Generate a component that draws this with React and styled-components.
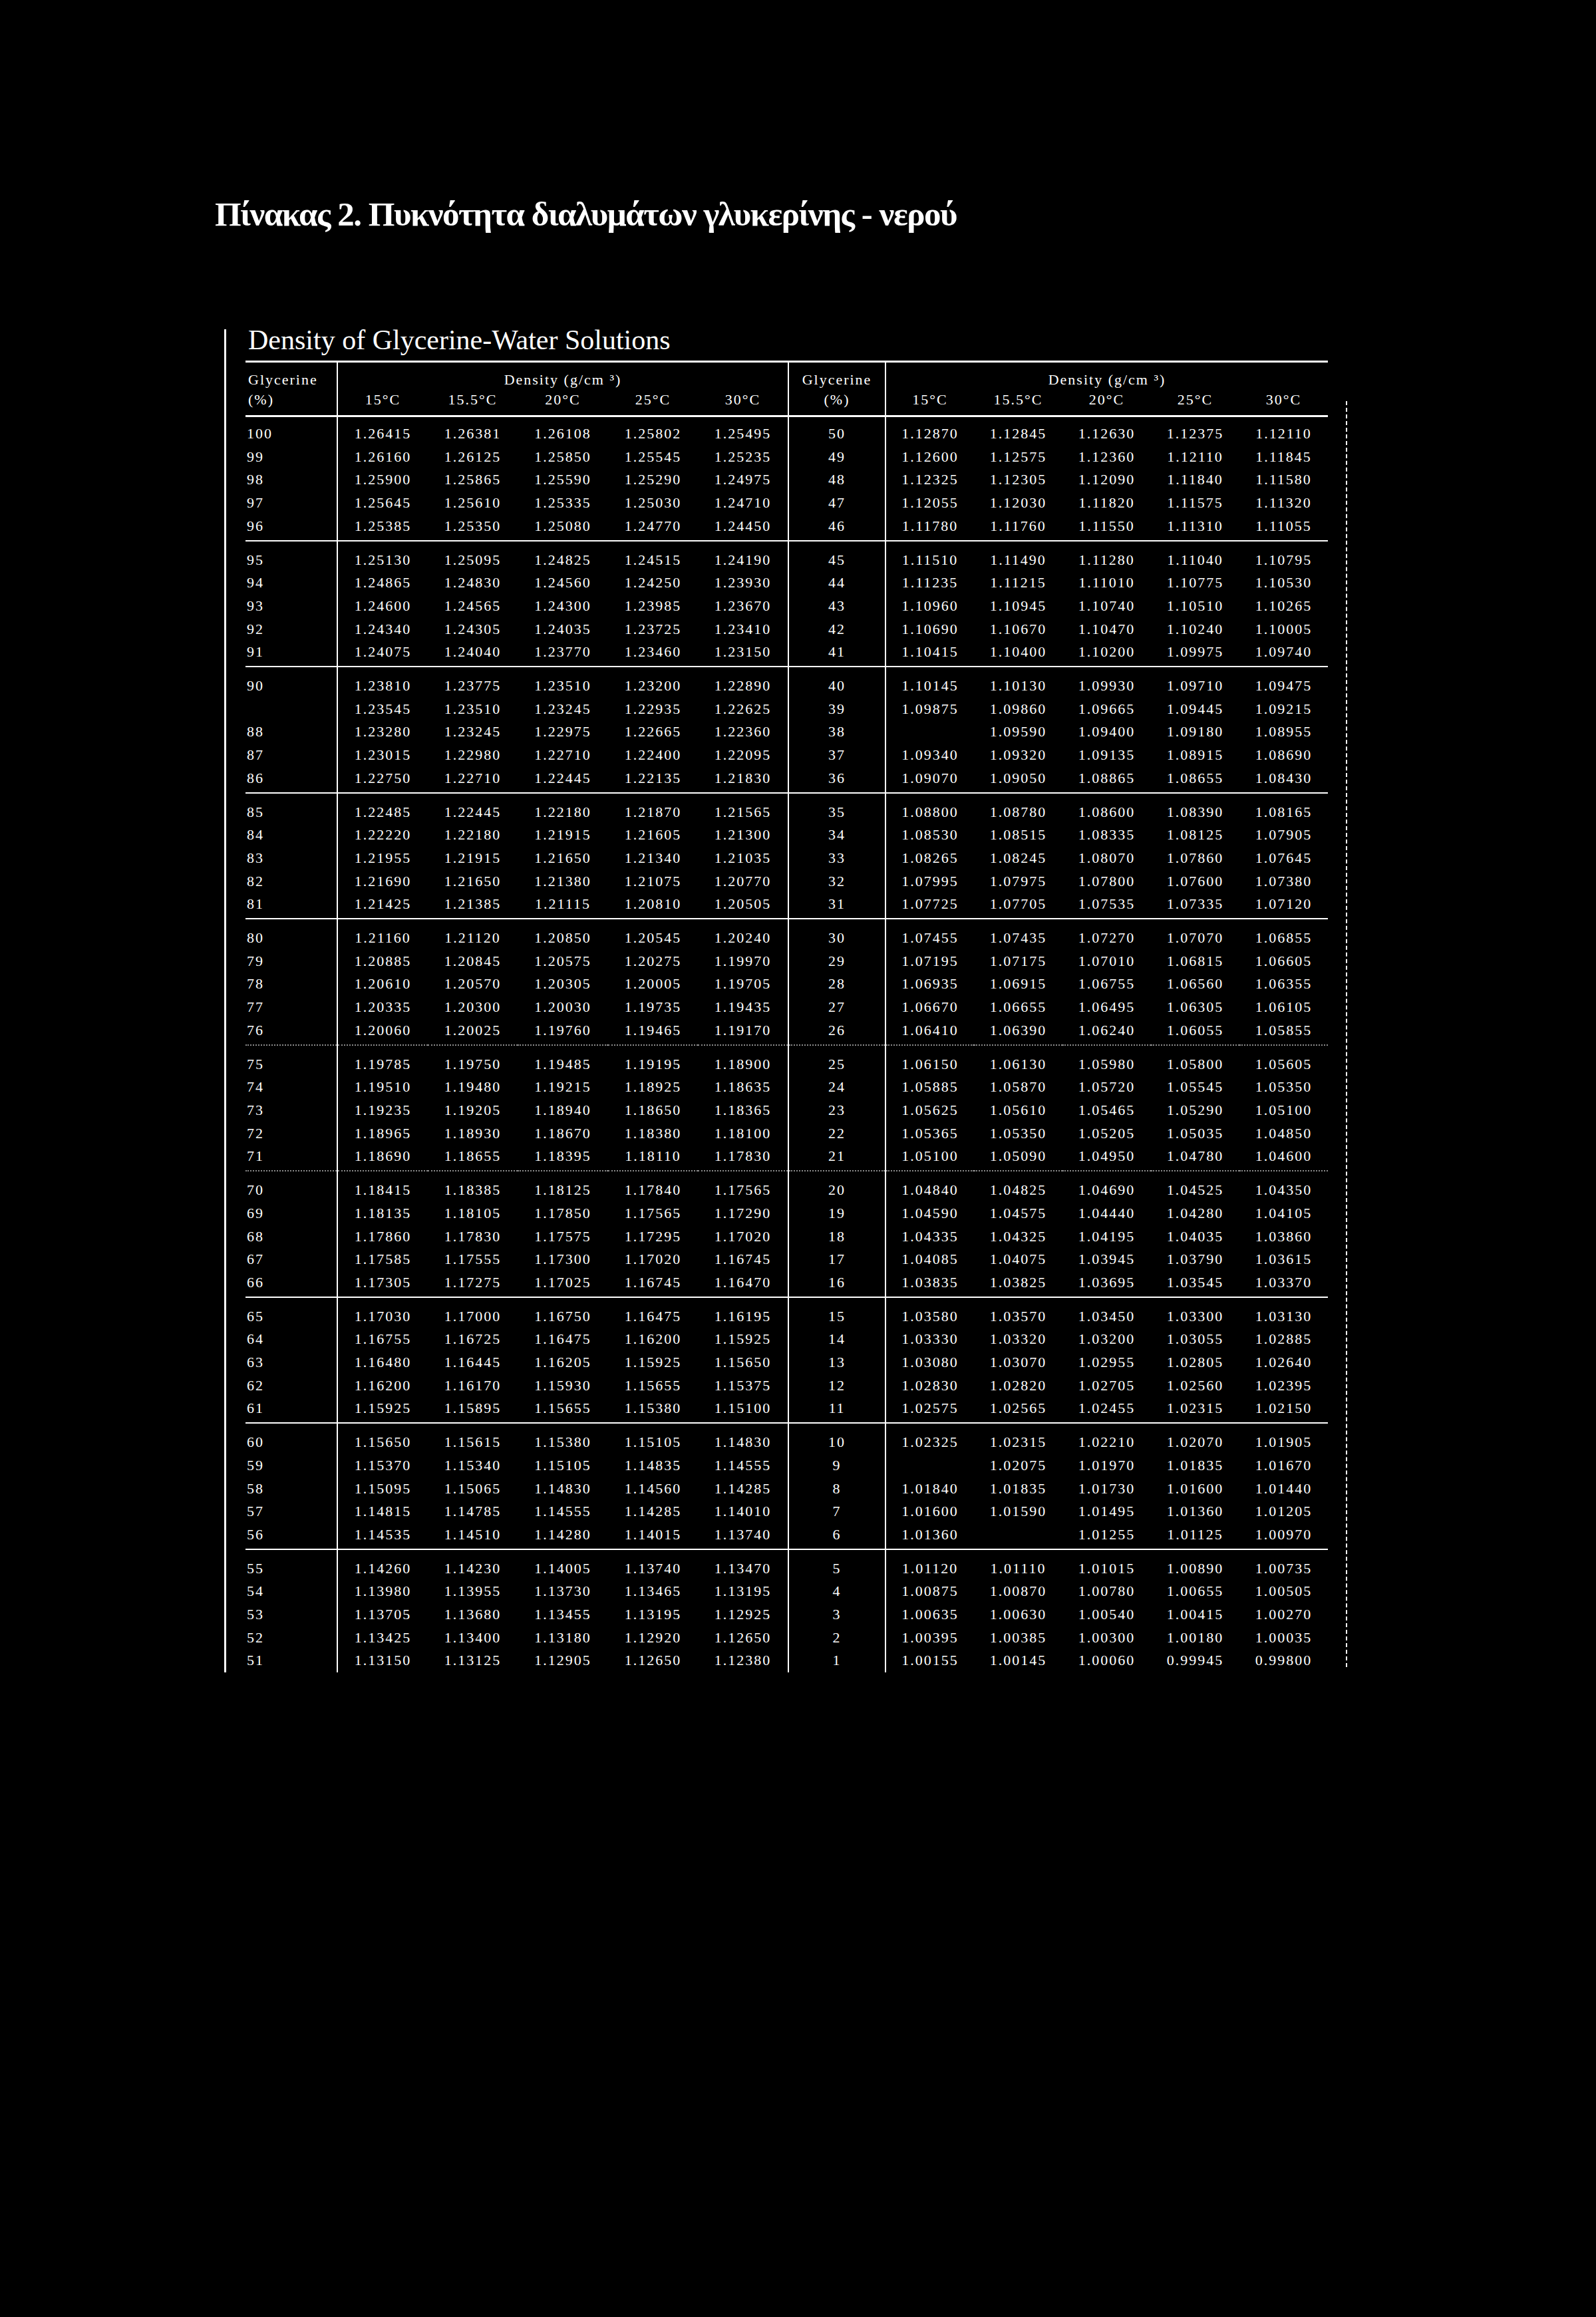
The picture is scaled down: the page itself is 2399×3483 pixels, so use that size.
import React from 'react';
import styled, { createGlobalStyle } from 'styled-components';

const LEFT = `
100 1.26415 1.26381 1.26108 1.25802 1.25495
99 1.26160 1.26125 1.25850 1.25545 1.25235
98 1.25900 1.25865 1.25590 1.25290 1.24975
97 1.25645 1.25610 1.25335 1.25030 1.24710
96 1.25385 1.25350 1.25080 1.24770 1.24450
95 1.25130 1.25095 1.24825 1.24515 1.24190
94 1.24865 1.24830 1.24560 1.24250 1.23930
93 1.24600 1.24565 1.24300 1.23985 1.23670
92 1.24340 1.24305 1.24035 1.23725 1.23410
91 1.24075 1.24040 1.23770 1.23460 1.23150
90 1.23810 1.23775 1.23510 1.23200 1.22890
- 1.23545 1.23510 1.23245 1.22935 1.22625
88 1.23280 1.23245 1.22975 1.22665 1.22360
87 1.23015 1.22980 1.22710 1.22400 1.22095
86 1.22750 1.22710 1.22445 1.22135 1.21830
85 1.22485 1.22445 1.22180 1.21870 1.21565
84 1.22220 1.22180 1.21915 1.21605 1.21300
83 1.21955 1.21915 1.21650 1.21340 1.21035
82 1.21690 1.21650 1.21380 1.21075 1.20770
81 1.21425 1.21385 1.21115 1.20810 1.20505
80 1.21160 1.21120 1.20850 1.20545 1.20240
79 1.20885 1.20845 1.20575 1.20275 1.19970
78 1.20610 1.20570 1.20305 1.20005 1.19705
77 1.20335 1.20300 1.20030 1.19735 1.19435
76 1.20060 1.20025 1.19760 1.19465 1.19170
75 1.19785 1.19750 1.19485 1.19195 1.18900
74 1.19510 1.19480 1.19215 1.18925 1.18635
73 1.19235 1.19205 1.18940 1.18650 1.18365
72 1.18965 1.18930 1.18670 1.18380 1.18100
71 1.18690 1.18655 1.18395 1.18110 1.17830
70 1.18415 1.18385 1.18125 1.17840 1.17565
69 1.18135 1.18105 1.17850 1.17565 1.17290
68 1.17860 1.17830 1.17575 1.17295 1.17020
67 1.17585 1.17555 1.17300 1.17020 1.16745
66 1.17305 1.17275 1.17025 1.16745 1.16470
65 1.17030 1.17000 1.16750 1.16475 1.16195
64 1.16755 1.16725 1.16475 1.16200 1.15925
63 1.16480 1.16445 1.16205 1.15925 1.15650
62 1.16200 1.16170 1.15930 1.15655 1.15375
61 1.15925 1.15895 1.15655 1.15380 1.15100
60 1.15650 1.15615 1.15380 1.15105 1.14830
59 1.15370 1.15340 1.15105 1.14835 1.14555
58 1.15095 1.15065 1.14830 1.14560 1.14285
57 1.14815 1.14785 1.14555 1.14285 1.14010
56 1.14535 1.14510 1.14280 1.14015 1.13740
55 1.14260 1.14230 1.14005 1.13740 1.13470
54 1.13980 1.13955 1.13730 1.13465 1.13195
53 1.13705 1.13680 1.13455 1.13195 1.12925
52 1.13425 1.13400 1.13180 1.12920 1.12650
51 1.13150 1.13125 1.12905 1.12650 1.12380
`;

const RIGHT = `
50 1.12870 1.12845 1.12630 1.12375 1.12110
49 1.12600 1.12575 1.12360 1.12110 1.11845
48 1.12325 1.12305 1.12090 1.11840 1.11580
47 1.12055 1.12030 1.11820 1.11575 1.11320
46 1.11780 1.11760 1.11550 1.11310 1.11055
45 1.11510 1.11490 1.11280 1.11040 1.10795
44 1.11235 1.11215 1.11010 1.10775 1.10530
43 1.10960 1.10945 1.10740 1.10510 1.10265
42 1.10690 1.10670 1.10470 1.10240 1.10005
41 1.10415 1.10400 1.10200 1.09975 1.09740
40 1.10145 1.10130 1.09930 1.09710 1.09475
39 1.09875 1.09860 1.09665 1.09445 1.09215
38 - 1.09590 1.09400 1.09180 1.08955
37 1.09340 1.09320 1.09135 1.08915 1.08690
36 1.09070 1.09050 1.08865 1.08655 1.08430
35 1.08800 1.08780 1.08600 1.08390 1.08165
34 1.08530 1.08515 1.08335 1.08125 1.07905
33 1.08265 1.08245 1.08070 1.07860 1.07645
32 1.07995 1.07975 1.07800 1.07600 1.07380
31 1.07725 1.07705 1.07535 1.07335 1.07120
30 1.07455 1.07435 1.07270 1.07070 1.06855
29 1.07195 1.07175 1.07010 1.06815 1.06605
28 1.06935 1.06915 1.06755 1.06560 1.06355
27 1.06670 1.06655 1.06495 1.06305 1.06105
26 1.06410 1.06390 1.06240 1.06055 1.05855
25 1.06150 1.06130 1.05980 1.05800 1.05605
24 1.05885 1.05870 1.05720 1.05545 1.05350
23 1.05625 1.05610 1.05465 1.05290 1.05100
22 1.05365 1.05350 1.05205 1.05035 1.04850
21 1.05100 1.05090 1.04950 1.04780 1.04600
20 1.04840 1.04825 1.04690 1.04525 1.04350
19 1.04590 1.04575 1.04440 1.04280 1.04105
18 1.04335 1.04325 1.04195 1.04035 1.03860
17 1.04085 1.04075 1.03945 1.03790 1.03615
16 1.03835 1.03825 1.03695 1.03545 1.03370
15 1.03580 1.03570 1.03450 1.03300 1.03130
14 1.03330 1.03320 1.03200 1.03055 1.02885
13 1.03080 1.03070 1.02955 1.02805 1.02640
12 1.02830 1.02820 1.02705 1.02560 1.02395
11 1.02575 1.02565 1.02455 1.02315 1.02150
10 1.02325 1.02315 1.02210 1.02070 1.01905
9 - 1.02075 1.01970 1.01835 1.01670
8 1.01840 1.01835 1.01730 1.01600 1.01440
7 1.01600 1.01590 1.01495 1.01360 1.01205
6 1.01360 - 1.01255 1.01125 1.00970
5 1.01120 1.01110 1.01015 1.00890 1.00735
4 1.00875 1.00870 1.00780 1.00655 1.00505
3 1.00635 1.00630 1.00540 1.00415 1.00270
2 1.00395 1.00385 1.00300 1.00180 1.00035
1 1.00155 1.00145 1.00060 0.99945 0.99800
`;

const parse = (txt) =>
  txt.trim().split('\n').map((l) => l.trim().split(/\s+/).map((v) => (v === '-' ? '' : v)));

const leftRows = parse(LEFT);
const rightRows = parse(RIGHT);
const rows = leftRows.map((l, i) => [...l, ...rightRows[i]]);

const WIDTHS = [138, 136, 135, 136, 135, 136, 146, 133, 133, 133, 133, 133];
const RULED = [1, 6, 7];
const TEMPS = ['15°C', '15.5°C', '20°C', '25°C', '30°C'];
// separators after 76 and 71 are only faint dots in the scan
const FAINT = [4, 5];

const GlobalStyle = createGlobalStyle`
  html, body {
    margin: 0;
    padding: 0;
    background: #000;
  }
  body {
    font-family: "Liberation Serif", "Times New Roman", serif;
    color: #fff;
  }
`;

const Page = styled.div`
  min-height: 3483px;
  padding: 292px 0 0 323px;
  box-sizing: border-box;
  background: #000;
`;

const Title = styled.h1`
  margin: 0 0 143px;
  font-size: 51px;
  line-height: 60px;
  font-weight: bold;
  letter-spacing: -1.5px;
  white-space: nowrap;
`;

const Frame = styled.div`
  display: flex;
  margin-left: 14px;
  padding-left: 29px;
  border-left: 3px solid #fff;
`;

const Content = styled.div`
  display: flex;
  flex-direction: column;
`;

const Subtitle = styled.h2`
  margin: 0 0 15px 4px;
  font-size: 42px;
  line-height: 32px;
  font-weight: normal;
  white-space: nowrap;
`;

const RightRule = styled.div`
  margin: 108px 0 8px 27px;
  border-left: 2px dashed #fff;
`;

const Table = styled.table`
  border-collapse: collapse;
  table-layout: fixed;
  width: 1627px;
  font-size: 22px;
  letter-spacing: 2px;
`;

const Col = styled.col`
  width: ${(p) => p.$w}px;
`;

const HeadRow = styled.tr`
  ${(p) => p.$top && 'border-top: 3px solid #fff;'}
  ${(p) => p.$bottom && 'border-bottom: 3px solid #fff;'}
`;

const HeadCell = styled.th`
  padding: ${(p) => (p.$top ? '12px 0 0' : '2px 0 9px')};
  padding-left: ${(p) => (p.$label ? '4px' : '0')};
  line-height: 28px;
  font-weight: normal;
  text-align: ${(p) => (p.$label ? 'left' : 'center')};
  border-left: ${(p) => (p.$rule ? '2px solid #fff' : 'none')};
  white-space: nowrap;
`;

const Row = styled.tr`
  border-bottom: ${(p) =>
    p.$sep === 'solid' ? '2px solid #fff' : p.$sep === 'faint' ? '2px dotted rgba(255,255,255,0.55)' : 'none'};
`;

const Cell = styled.td`
  padding: ${(p) => p.$top}px 0 ${(p) => p.$bottom}px ${(p) => (p.$label ? 2 : 0)}px;
  line-height: 34.7px;
  text-align: ${(p) => (p.$label ? 'left' : 'center')};
  border-left: ${(p) => (p.$rule ? '2px solid #fff' : 'none')};
  white-space: nowrap;
`;

const App = () => {
  return (
    <>
      <GlobalStyle />
      <Page>
        <Title>Πίνακας 2. Πυκνότητα διαλυμάτων γλυκερίνης - νερού</Title>
        <Frame>
          <Content>
            <Subtitle>Density of Glycerine-Water Solutions</Subtitle>
            <Table>
              <colgroup>
                {WIDTHS.map((w, i) => (
                  <Col key={i} $w={w} />
                ))}
              </colgroup>
              <thead>
                <HeadRow $top>
                  <HeadCell $top $label>Glycerine</HeadCell>
                  <HeadCell $top $rule colSpan={5}>Density (g/cm ³)</HeadCell>
                  <HeadCell $top $rule>Glycerine</HeadCell>
                  <HeadCell $top $rule colSpan={5}>Density (g/cm ³)</HeadCell>
                </HeadRow>
                <HeadRow $bottom>
                  <HeadCell $label>(%)</HeadCell>
                  {TEMPS.map((t, i) => (
                    <HeadCell key={t} $rule={i === 0}>{t}</HeadCell>
                  ))}
                  <HeadCell $rule>(%)</HeadCell>
                  {TEMPS.map((t, i) => (
                    <HeadCell key={'r' + t} $rule={i === 0}>{t}</HeadCell>
                  ))}
                </HeadRow>
              </thead>
              <tbody>
                {rows.map((r, i) => {
                  const group = Math.floor(i / 5);
                  const first = i % 5 === 0;
                  const last = i % 5 === 4 && i < rows.length - 1;
                  const sep = last ? (FAINT.includes(group) ? 'faint' : 'solid') : null;
                  return (
                    <Row key={i} $sep={sep}>
                      {r.map((v, j) => (
                        <Cell
                          key={j}
                          $label={j === 0}
                          $rule={RULED.includes(j)}
                          $top={first ? (i === 0 ? 8 : 11) : 0}
                          $bottom={last ? 3 : 0}
                        >
                          {v}
                        </Cell>
                      ))}
                    </Row>
                  );
                })}
              </tbody>
            </Table>
          </Content>
          <RightRule />
        </Frame>
      </Page>
    </>
  );
};

export default App;
